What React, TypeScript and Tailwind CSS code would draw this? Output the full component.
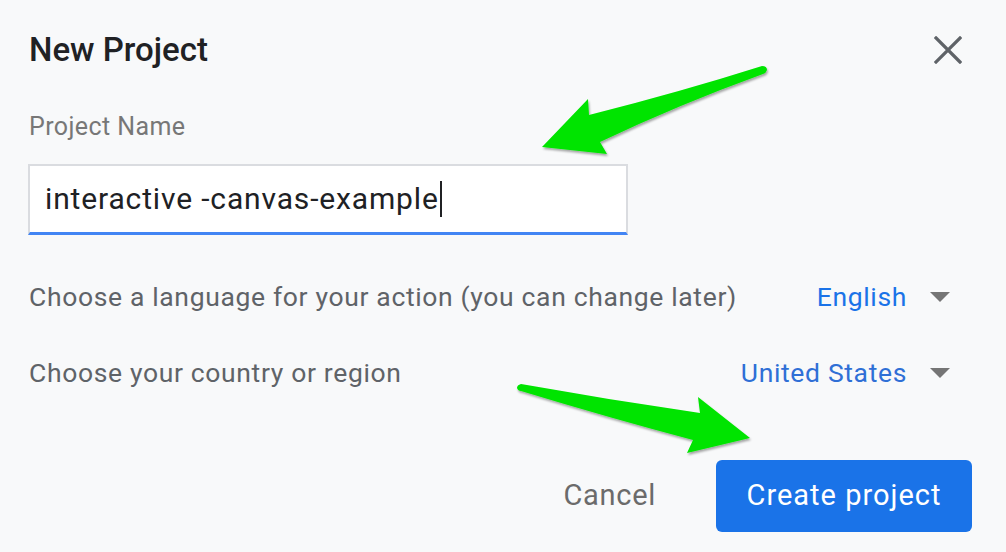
import React from 'react';

const Caret: React.FC = () => (
  <svg width="20" height="10" viewBox="0 0 20 10" className="mr-[22px] ml-[23px] shrink-0">
    <path d="M0 0 L20 0 L10 10 Z" fill="#757575" />
  </svg>
);

const Arrows: React.FC = () => (
  <svg className="absolute inset-0 pointer-events-none" width="1006" height="552" viewBox="0 0 1006 552">
    <defs>
      <filter id="shade" x="-10%" y="-10%" width="120%" height="130%">
        <feDropShadow dx="1" dy="2" stdDeviation="1.2" floodColor="#000" floodOpacity="0.35" />
      </filter>
    </defs>
    <g fill="#00e400" filter="url(#shade)">
      <path d="M542 147 L588 99 L589 115 Q680 92 762 66 Q767 66 767 70 Q766 73 763 74 Q680 104 600 142 L607 154 Z" />
      <path d="M750 438 L698 397 L700 413 Q610 400 521 384 Q517 385 517 388 Q518 391 521 391 Q610 418 693 440 L687 453 Z" />
    </g>
  </svg>
);

export default function App() {
  return (
    <div className="relative w-[1006px] h-[552px] bg-[#f8f9fa] overflow-hidden font-['Roboto',sans-serif]">
      <div className="flex flex-col pl-[29px] pr-[34px]">
        {/* Header */}
        <div className="flex items-center justify-between pt-[30px]">
          <h1 className="text-[33px] leading-[40px] font-medium text-[#202124]">New Project</h1>
          <svg width="28" height="28" viewBox="0 0 28 28" className="mr-[10px]">
            <path d="M2 2 L26 26 M26 2 L2 26" stroke="#5f6368" strokeWidth="3.2" strokeLinecap="square" />
          </svg>
        </div>

        {/* Project name */}
        <label className="mt-[42px] text-[25px] leading-[30px] tracking-[0.4px] text-[#777777]">Project Name</label>
        <div className="mt-[22px] -ml-[1px] w-[600px] h-[71px] bg-white border-2 border-[#dadce0] border-b-[3px] border-b-[#4285f4] flex items-center pl-[15px]">
          <span className="text-[30px] leading-[36px] tracking-[0.85px] text-[#202124]">interactive -canvas-example</span>
          <span className="ml-[1px] w-[2px] h-[36px] bg-[#202124]" />
        </div>

        {/* Options */}
        <div className="mt-[24px] flex items-center h-[76px]">
          <span className="flex-1 text-[26.5px] leading-[30px] tracking-[0.65px] text-[#5f6368]">
            Choose a language for your action (you can change later)
          </span>
          <span className="text-[26.5px] leading-[30px] tracking-[0.65px] text-[#1a73e8]">English</span>
          <Caret />
        </div>
        <div className="flex items-center h-[76px]">
          <span className="flex-1 text-[26.5px] leading-[30px] tracking-[0.65px] text-[#5f6368]">
            Choose your country or region
          </span>
          <span className="text-[26.5px] leading-[30px] tracking-[0.65px] text-[#2f6fd6]">United States</span>
          <Caret />
        </div>

        {/* Actions */}
        <div className="mt-[49px] flex justify-end items-center">
          <button className="px-[24px] h-[72px] mr-[36px] text-[29px] tracking-[0.7px] text-[#6b6b6b]">Cancel</button>
          <button className="w-[256px] h-[72px] rounded-[6px] bg-[#1a73e8] text-white text-[29px] tracking-[1px]">
            Create project
          </button>
        </div>
      </div>
      <Arrows />
    </div>
  );
}
